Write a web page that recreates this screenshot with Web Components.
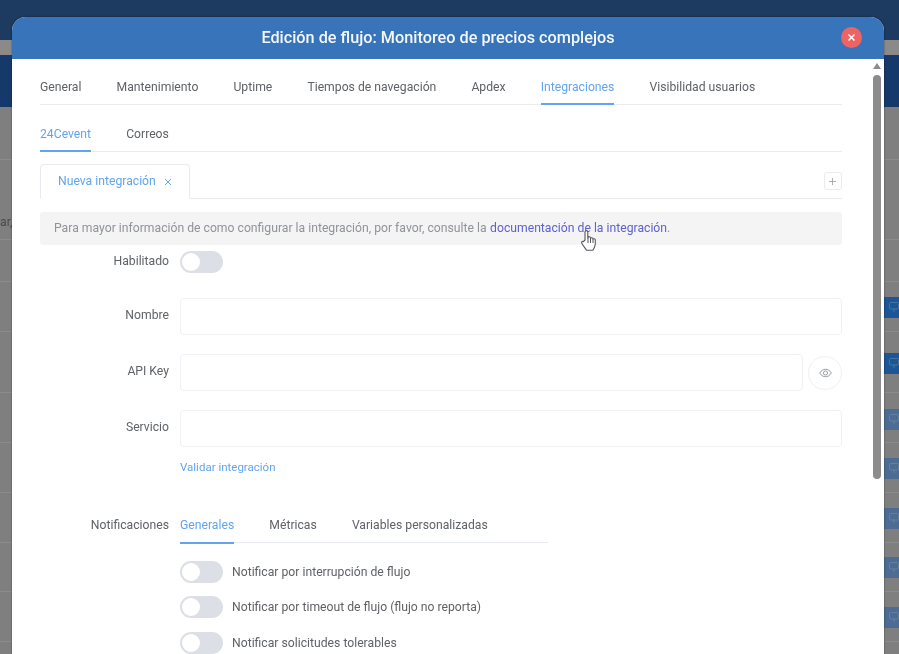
<!DOCTYPE html>
<html lang="es"><head><meta charset="utf-8"><title>Edición de flujo</title>
<style>
html,body{margin:0;padding:0;height:100%;overflow:hidden;background:#808080;font-family:Roboto,"Liberation Sans",sans-serif}
</style></head><body>
<x-app></x-app>
<template id="t-backdrop"><style>
:host{position:absolute;inset:0;display:block;background:#7f7f7f;overflow:hidden}
.top{height:40px;background:#1d3a60}
.grey{height:15px;background:#8c8a88}
.nav{height:52px;background:#15396b}
.row{border-bottom:1px solid #8b8b8b;box-sizing:border-box;position:relative}
.t{font:12.2px Roboto,sans-serif;color:#4a4a4a;position:absolute;left:0;top:55px}
.b{position:absolute;left:884px;width:15px;height:21px;background:#4c6c94;color:#64809f}
.b.on{background:#1c5696;color:#47749f}
.b svg{position:absolute;left:5px;top:5px}
</style>
<div class="top"></div><div class="grey"></div><div class="nav"></div>
<div class="row" style="height:53px"></div><div class="row" style="height:80px"><span class="t">ar,</span></div>
<div class="row" style="height:42px"></div><div class="row" style="height:50px"></div>
<div class="row" style="height:61px"></div><div class="row" style="height:50px"></div>
<div class="row" style="height:50px"></div><div class="row" style="height:50px"></div>
<div class="row" style="height:49px"></div><div class="row" style="height:50px"></div>
<div class="b on" style="top:297px"><svg width="10" height="11" viewBox="0 0 10 11" fill="none" stroke="currentColor"><rect x=".5" y=".5" width="9" height="6.500" rx="1"/><path d="M5 7v3"/></svg></div>
<div class="b on" style="top:353px"><svg width="10" height="11" viewBox="0 0 10 11" fill="none" stroke="currentColor"><rect x=".5" y=".5" width="9" height="6.500" rx="1"/><path d="M5 7v3"/></svg></div>
<div class="b" style="top:409px"><svg width="10" height="11" viewBox="0 0 10 11" fill="none" stroke="currentColor"><rect x=".5" y=".5" width="9" height="6.500" rx="1"/><path d="M5 7v3"/></svg></div>
<div class="b" style="top:458px"><svg width="10" height="11" viewBox="0 0 10 11" fill="none" stroke="currentColor"><rect x=".5" y=".5" width="9" height="6.500" rx="1"/><path d="M5 7v3"/></svg></div>
<div class="b" style="top:508px"><svg width="10" height="11" viewBox="0 0 10 11" fill="none" stroke="currentColor"><rect x=".5" y=".5" width="9" height="6.500" rx="1"/><path d="M5 7v3"/></svg></div>
<div class="b" style="top:557px"><svg width="10" height="11" viewBox="0 0 10 11" fill="none" stroke="currentColor"><rect x=".5" y=".5" width="9" height="6.500" rx="1"/><path d="M5 7v3"/></svg></div>
<div class="b" style="top:607px"><svg width="10" height="11" viewBox="0 0 10 11" fill="none" stroke="currentColor"><rect x=".5" y=".5" width="9" height="6.500" rx="1"/><path d="M5 7v3"/></svg></div>
</template>

<template id="t-tabs"><style>
:host{display:flex;gap:35.1px;box-sizing:border-box;border-bottom:1.5px solid #e9ecf1;font:12.2px/17px Roboto,sans-serif;color:#5f6266}
::slotted(span){display:block;padding:var(--pad,9.500px 0 7.500px);margin-bottom:-1.500px;border-bottom:2px solid transparent;white-space:nowrap}
::slotted(span.on){color:#62a5ee;border-bottom-color:#62a5ee}
</style><slot></slot></template>

<template id="t-toggle"><style>
:host{display:flex;align-items:center;gap:9px;font:12.2px/22px Roboto,sans-serif;color:#5f6266;white-space:nowrap}
.s{width:43px;height:22px;border-radius:11px;background:#dcdfe6;position:relative;flex:none}
.s::after{content:"";position:absolute;left:2px;top:2px;width:18px;height:18px;border-radius:50%;background:#fff}
</style><span class="s"></span><slot></slot></template>

<template id="t-field"><style>
:host{display:grid;grid-template-columns:130px 1fr;column-gap:10px;align-items:center;font:12.2px/17px Roboto,sans-serif;color:#5f6266}
.l{text-align:right;padding:0 1px 3px 0}
.c{display:flex;align-items:center;gap:5px;min-width:0}
.i{flex:1;height:37px;box-sizing:border-box;border:1.500px solid #eff1f5;border-radius:4px;background:#fff}
::slotted(*){flex:none}
</style><span class="l"><slot name="label"></slot></span><span class="c"><span class="i"></span><slot></slot></span></template>

<template id="t-modal"><style>
:host{position:absolute;left:12px;top:17px;width:872px;height:660px;display:block;background:#fff;border-radius:14px 14px 0 0;box-shadow:0 0 2px rgba(0,0,0,.5);overflow:hidden;font-family:Roboto,sans-serif}
header{height:42px;background:#3874ba;display:flex;align-items:center;justify-content:center;position:relative;color:#f3f7fb;font:500 16.25px/20px Roboto,sans-serif;padding-right:20px;box-sizing:border-box}
.x{position:absolute;left:829px;top:10px;width:21px;height:21px;border-radius:50%;background:#ee6464;display:flex;align-items:center;justify-content:center}
.bar{position:absolute;left:861px;top:58px;width:8px;height:404px;border-radius:4px;background:#8c8c8c}
.up{position:absolute;left:861px;top:46px;width:0;height:0;border:4px solid transparent;border-top:0;border-bottom:6px solid #8c8c8c}
main{padding:10px 42px 0 28px;display:flex;flex-direction:column}
.cards{display:flex;justify-content:space-between;align-items:flex-start;margin-top:12.500px;height:34px;border-bottom:1px solid #e9ebf0;font:12.2px/17px Roboto,sans-serif}
.card{height:35px;width:150px;box-sizing:border-box;border:1px solid #e9ebf0;border-bottom:1px solid #fff;border-radius:4px 4px 0 0;color:#62a5ee;display:flex;align-items:center;padding-left:17px;gap:8px}
.plus{width:18px;height:18px;margin:8px .5px 0 0;box-sizing:border-box;border:1px solid #e9ebf0;border-radius:3px;display:flex;align-items:center;justify-content:center}
.info{margin-top:13px;height:33px;background:#f4f4f5;border-radius:3px;padding:0 14px;display:flex;align-items:center;font:12.2px/17px Roboto,sans-serif;color:#909399;white-space:nowrap;position:relative}
.info a{color:#5f61cf;text-decoration:none;margin-left:3.5px}
.hand{position:absolute;left:540px;top:17px}
.hab{display:grid;grid-template-columns:130px 1fr;column-gap:10px;align-items:center;font:12.2px/17px Roboto,sans-serif;color:#5f6266;margin-top:6px}
.hab span{text-align:right;padding:0 1px 1px 0}
x-field{margin-top:19px}
.eye{width:34px;height:34px;box-sizing:border-box;border:1.500px solid #eff1f4;border-radius:50%;display:flex;align-items:center;justify-content:center}
.val{margin:12px 0 0 140px;font:11.5px/16px Roboto,sans-serif;color:#62a5ee}
.noti{display:grid;grid-template-columns:130px 368px;column-gap:10px;margin-top:41.500px;font:12.2px/17px Roboto,sans-serif;color:#5f6266;align-items:start}
.noti>span{text-align:right;line-height:17px;padding-right:1px}
.noti x-tabs{--pad:0 0 8px}
.list{margin:18px 0 0 140px;display:flex;flex-direction:column;gap:13.300px}
</style>
<header>Edición de flujo: Monitoreo de precios complejos
<span class="x"><svg width="9" height="9" viewBox="0 0 9 9" stroke="#fff" stroke-width="1.500"><path d="M1.500 1.500l6 6M7.500 1.500l-6 6"/></svg></span></header>
<span class="up"></span><span class="bar"></span>
<main>
<x-tabs><span>General</span><span>Mantenimiento</span><span>Uptime</span><span>Tiempos de navegación</span><span>Apdex</span><span class="on">Integraciones</span><span>Visibilidad usuarios</span></x-tabs>
<x-tabs style="margin-top:11.500px"><span class="on">24Cevent</span><span>Correos</span></x-tabs>
<div class="cards"><div class="card">Nueva integración<svg width="8" height="8" viewBox="0 0 8 8" stroke="#62a5ee" stroke-width="1"><path d="M1 1l6 6M7 1L1 7"/></svg></div><div class="plus"><svg width="7" height="7" viewBox="0 0 8 8" stroke="#a0a3a8" stroke-width="1"><path d="M4 0v8M0 4h8"/></svg></div></div>
<div class="info">Para mayor información de como configurar la integración, por favor, consulte la <a>documentación de la integración</a>.
<svg class="hand" width="17" height="23" viewBox="0 0 17 23"><path d="M5 11V3a1.400 1.400 0 0 1 2.800 0v6l.2-.5a1.300 1.300 0 0 1 2.500.3v.6a1.300 1.300 0 0 1 2.400.3v.7a1.300 1.300 0 0 1 2.400.4c.2 2.500.1 5.200-.8 7.400-.4 1-1 2-1.600 3H6.500c-1-1.600-3-4-4.700-7-.7-1.200.5-2.300 1.500-1.500z" fill="#fff" stroke="#55575b" stroke-width="1.100" stroke-linejoin="round"/><path d="M8 9v5M10.500 10v4M13 11v3" stroke="#55575b" fill="none"/></svg></div>
<div class="hab"><span>Habilitado</span><x-toggle></x-toggle></div>
<x-field style="margin-top:25px"><span slot="label">Nombre</span></x-field>
<x-field><span slot="label">API Key</span><span class="eye"><svg width="13" height="10" viewBox="0 0 14 10" fill="none" stroke="#909399"><path d="M.8 5C2.300 2.300 4.500 1 7 1s4.700 1.300 6.200 4C11.700 7.700 9.500 9 7 9S2.300 7.700.8 5z"/><circle cx="7" cy="5" r="2.200"/></svg></span></x-field>
<x-field><span slot="label">Servicio</span></x-field>
<div class="val">Validar integración</div>
<div class="noti"><span>Notificaciones</span><x-tabs><span class="on">Generales</span><span>Métricas</span><span>Variables personalizadas</span></x-tabs></div>
<div class="list"><x-toggle>Notificar por interrupción de flujo</x-toggle><x-toggle>Notificar por timeout de flujo (flujo no reporta)</x-toggle><x-toggle>Notificar solicitudes tolerables</x-toggle></div>
</main></template>

<template id="t-app"><style>:host{position:absolute;inset:0;display:block;overflow:hidden;filter:blur(.6px)}</style><x-backdrop></x-backdrop><x-modal></x-modal></template>
<script>
const reg=(n,t)=>customElements.define(n,class extends HTMLElement{constructor(){super();this.attachShadow({mode:"open"}).appendChild(document.getElementById(t).content.cloneNode(true))}});
reg("x-tabs","t-tabs");reg("x-toggle","t-toggle");reg("x-field","t-field");reg("x-backdrop","t-backdrop");reg("x-modal","t-modal");reg("x-app","t-app");
</script>
</body></html>
